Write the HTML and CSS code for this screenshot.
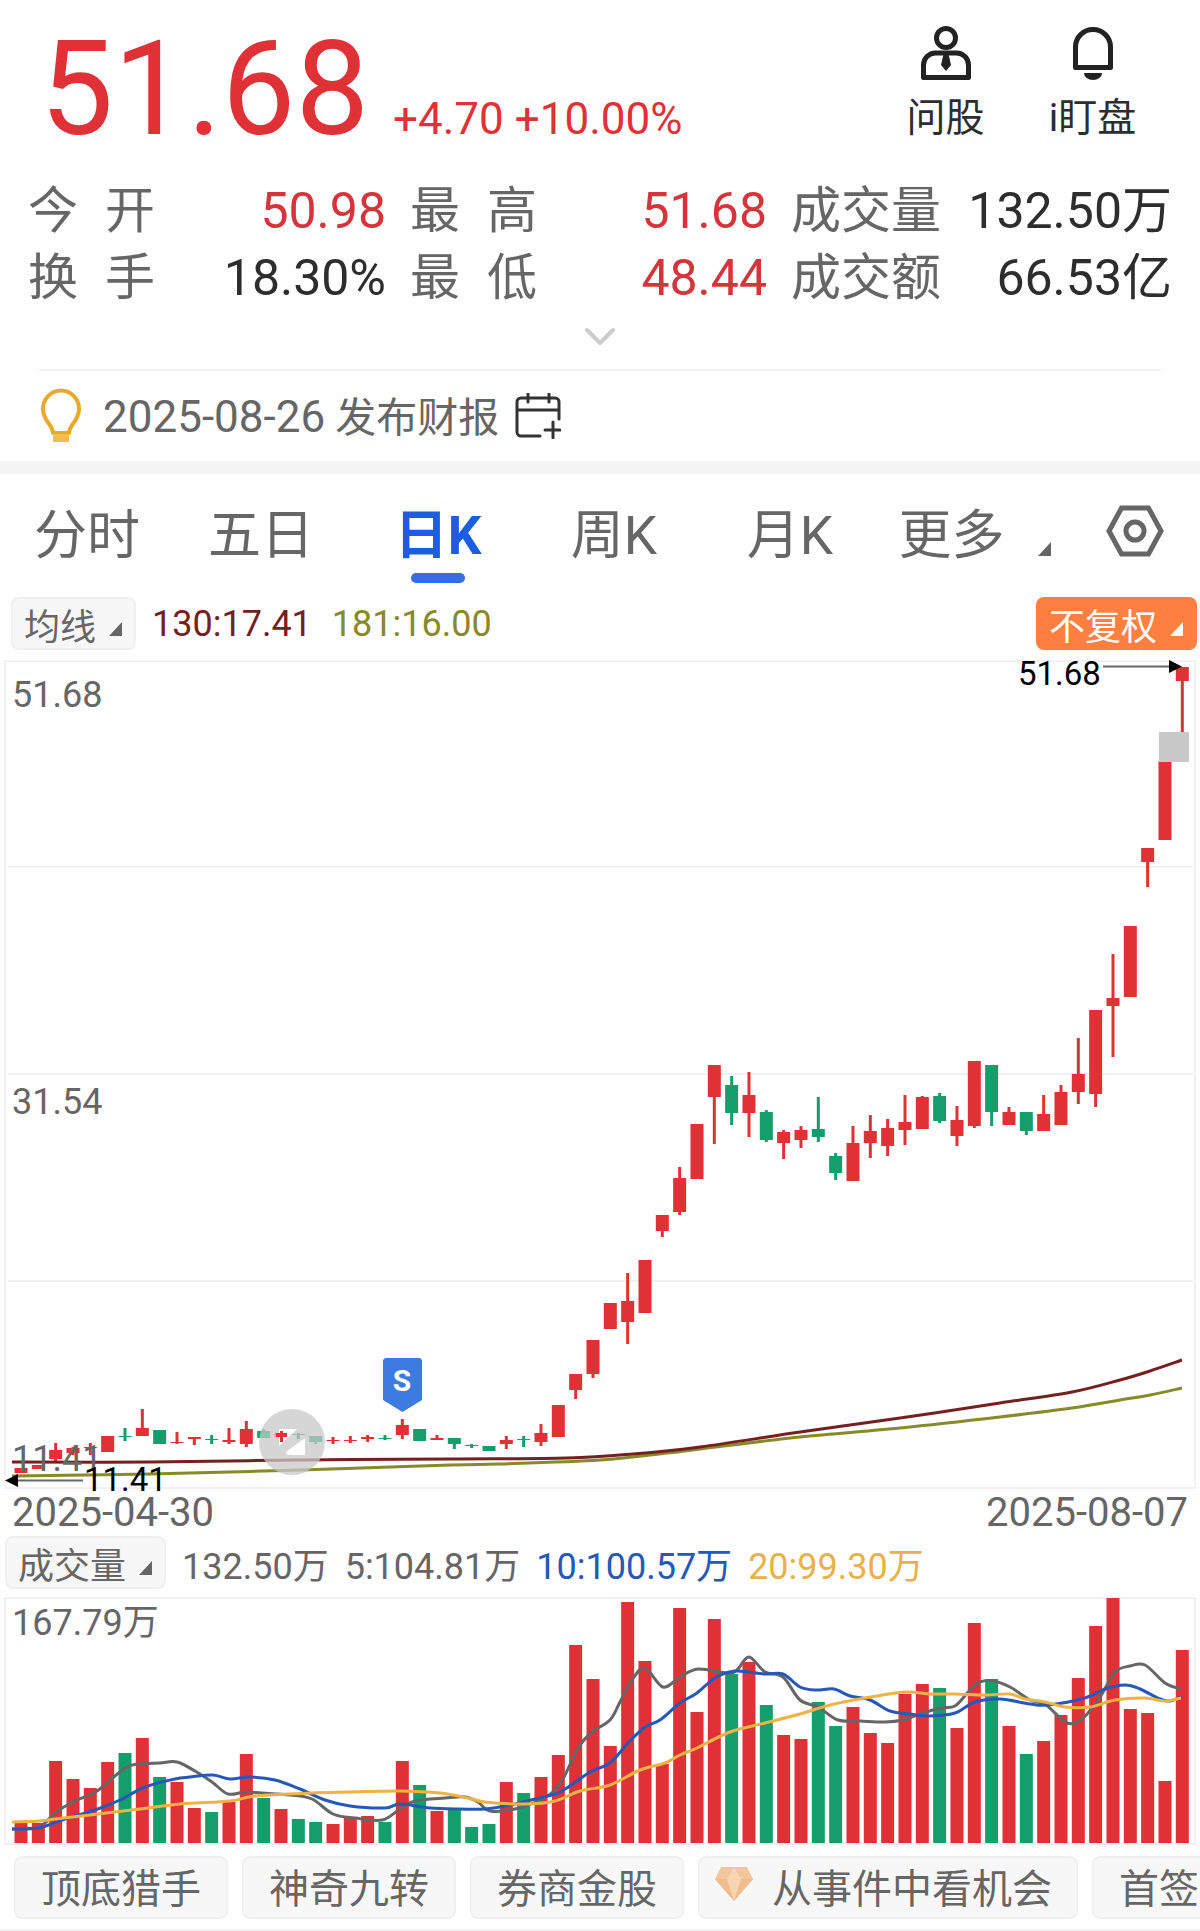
FILE: index.html
```html
<!DOCTYPE html>
<html lang="zh-CN">
<head>
<meta charset="utf-8">
<meta name="viewport" content="width=device-width, initial-scale=1">
<title>个股行情</title>
<link rel="stylesheet" href="styles.css">
</head>
<body>
<main class="page">
  <header class="quote">
    <div class="quote-price">
      <strong class="price">51.68</strong>
      <span class="change">+4.70 +10.00%</span>
    </div>
    <nav class="tools" aria-label="工具">
      <button class="tool" type="button">
        <svg class="tool-icon" viewBox="0 0 56 56" aria-hidden="true">
          <circle cx="28" cy="13" r="9.500" fill="none" stroke="#222" stroke-width="5"/>
          <path d="M5.500 52.500V40a12 12 0 0 1 12-12h21a12 12 0 0 1 12 12v12.500z" fill="none" stroke="#222" stroke-width="5" stroke-linejoin="round"/>
          <path d="M25.500 29h5l2.500 11-5 6-5-6z" fill="#222"/>
        </svg>
        <span>问股</span>
      </button>
      <button class="tool" type="button">
        <svg class="tool-icon" viewBox="0 0 56 56" aria-hidden="true">
          <path d="M10.500 42.500V22a17.500 17.500 0 0 1 35 0v20.500z" fill="none" stroke="#222" stroke-width="5" stroke-linejoin="round"/>
          <path d="M19 48h18a9 7 0 0 1-18 0z" fill="#222"/>
        </svg>
        <span>i盯盘</span>
      </button>
    </nav>
  </header>

  <dl class="stats">
    <dt class="spread"><span>今</span><span>开</span></dt><dd class="up">50.98</dd>
    <dt class="spread"><span>最</span><span>高</span></dt><dd class="up">51.68</dd>
    <dt>成交量</dt><dd>132.50万</dd>
    <dt class="spread"><span>换</span><span>手</span></dt><dd>18.30%</dd>
    <dt class="spread"><span>最</span><span>低</span></dt><dd class="up">48.44</dd>
    <dt>成交额</dt><dd>66.53亿</dd>
  </dl>
  <button class="expand" type="button" aria-label="展开更多">
    <svg class="expand-icon" viewBox="0 0 32 20" aria-hidden="true"><path d="M3 3l13 13L29 3" fill="none" stroke="#ccc" stroke-width="4" stroke-linecap="round" stroke-linejoin="round"/></svg>
  </button>

  <section class="notice">
    <svg class="bulb" viewBox="0 0 40 56" aria-hidden="true">
      <path d="M12 45c0-8-10-12-10-24a18 18.500 0 0 1 36 0c0 12-10 16-10 24z" fill="none" stroke="#e8a92c" stroke-width="4" stroke-linejoin="round"/>
      <path d="M12 46h16v8H12z" fill="#f4bd4b"/>
    </svg>
    <p class="notice-text"><time class="notice-date">2025-08-26</time> 发布财报</p>
    <button class="calendar" type="button" aria-label="添加日历提醒">
      <svg viewBox="0 0 46 46" aria-hidden="true" fill="none" stroke="#333" stroke-width="3" stroke-linecap="round">
        <path d="M25 43H6a4 4 0 0 1-4-4V9a4 4 0 0 1 4-4h34a4 4 0 0 1 4 4v17M2 17h42M13 1v8M34 1v8M38 29v16M30 37h15"/>
      </svg>
    </button>
  </section>

  <nav class="tabs" aria-label="周期">
    <button class="tab" type="button">分时</button>
    <button class="tab" type="button">五日</button>
    <button class="tab tab-active" type="button" aria-current="true">日K</button>
    <button class="tab" type="button">周K</button>
    <button class="tab" type="button">月K</button>
    <button class="tab tab-more" type="button">更多<svg class="corner" viewBox="0 0 15 16" aria-hidden="true"><path d="M14 1v14H1z"/></svg></button>
    <button class="tab" type="button" aria-label="设置">
      <svg class="gear" viewBox="0 0 58 52" aria-hidden="true" fill="none" stroke="#666"><path d="M15.500 3h27L55 26 42.500 49h-27L3 26z" stroke-width="5"/><circle cx="29" cy="26" r="9" stroke-width="5"/></svg>
    </button>
  </nav>

  <section class="indicator">
    <button class="pill" type="button">均线<svg class="corner" viewBox="0 0 15 16" aria-hidden="true"><path d="M14 1v14H1z"/></svg></button>
    <span class="ma130">130:17.41</span>
    <span class="ma181">181:16.00</span>
    <button class="pill pill-orange" type="button">不复权<svg class="corner" viewBox="0 0 15 16" aria-hidden="true"><path d="M14 1v14H1z"/></svg></button>
  </section>

  <svg class="chart" id="kline" viewBox="0 0 1200 831" role="img" aria-label="日K线图">
    <path d="M5 1H1195V828H5zM8 207H1193M8 414H1193M8 621H1193" fill="none" stroke="#f1f1f1" stroke-width="2"/>
    <g id="candles"></g>
    <path id="ma181" fill="none" stroke="#878a2b" stroke-width="3"/>
    <path id="ma130" fill="none" stroke="#74201f" stroke-width="3"/>
    <rect x="1159" y="72" width="30" height="30" fill="#c8c8c8"/>
    <g class="axis">
      <text x="12" y="47">51.68</text>
      <text x="12" y="454">31.54</text>
      <text x="12" y="811">11.41</text>
    </g>
    <g class="extreme">
      <text x="1018" y="25">51.68</text>
      <text x="84" y="831">11.41</text>
      <path d="M1103 6.500h67M17 820.500h66" stroke="#666" stroke-width="2"/>
      <path d="M1169 0l13 6.500-13 6.500zM18 814l-13 6.500 13 6.500z"/>
    </g>
    <path d="M385 698h35l2 2v40l-19.500 12-19.500-12v-40z" fill="#3e7be0"/>
    <text class="marker" x="402" y="731">S</text>
    <circle cx="292" cy="782" r="33" fill="#c8c8c8" fill-opacity=".75"/>
    <path d="M279 769h18l-18 17zM305 778v17h-18l-1-3z" fill="#fff"/>
    <path d="M276 773h11v4h-11zM280 771h3v11h-3z" fill="#e03236"/>
  </svg>
  <div class="dates"><time>2025-04-30</time><time>2025-08-07</time></div>

  <section class="indicator indicator-volume">
    <button class="pill" type="button">成交量<svg class="corner" viewBox="0 0 15 16" aria-hidden="true"><path d="M14 1v14H1z"/></svg></button>
    <span>132.50万</span>
    <span>5:104.81万</span>
    <span class="vol10">10:100.57万</span>
    <span class="vol20">20:99.30万</span>
  </section>
  <svg class="chart" viewBox="0 0 1200 248" role="img" aria-label="成交量图">
    <path d="M5 1H1195V247H5z" fill="none" stroke="#f1f1f1" stroke-width="2"/>
    <g id="volumes"></g>
    <path id="vma5" fill="none" stroke="#666" stroke-width="3"/>
    <path id="vma10" fill="none" stroke="#2558b8" stroke-width="3"/>
    <path id="vma20" fill="none" stroke="#efb244" stroke-width="3"/>
    <g class="axis"><text x="12" y="38">167.79万</text></g>
  </svg>

  <nav class="chips" aria-label="推荐">
    <button class="chip" type="button">顶底猎手</button>
    <button class="chip" type="button">神奇九转</button>
    <button class="chip" type="button">券商金股</button>
    <button class="chip chip-gem" type="button">
      <svg class="gem" viewBox="0 0 40 34" aria-hidden="true"><path d="M7 0h26l6 12-19 22L1 12z" fill="#f3c79c"/><path d="M1 12h38L20 34z" fill="#efbd90"/><path d="M13 12l7-12 7 12-7 22z" fill="#f7d5b3"/></svg>从事件中看机会</button>
    <button class="chip" type="button">首签必读</button>
  </nav>
</main>
<script src="chart.js"></script>
</body>
</html>
```
FILE: styles.css
```css
* { box-sizing: border-box; }

body {
  margin: 0;
  background: #fefefe;
  color: #666;
  font-family: Roboto, "Noto Sans CJK SC", sans-serif;
}

button {
  margin: 0;
  padding: 0;
  border: 0;
  background: none;
  color: inherit;
  font: inherit;
}

svg { display: block; }

.page { overflow: hidden; }

.quote {
  display: flex;
  justify-content: space-between;
  padding: 0 34px 0 40px;
}

.quote-price {
  display: flex;
  align-items: baseline;
  gap: 24px;
  color: #e03236;
}

.price {
  font-size: 131px;
  font-weight: 400;
  line-height: 178px;
}

.change { font-size: 44px; }

.tools {
  display: flex;
  padding-top: 25px;
}

.tool {
  display: flex;
  flex-direction: column;
  align-items: center;
  gap: 8px;
  width: 147px;
  color: #2d2d2d;
  font-size: 39px;
  line-height: 58px;
}

.tool-icon {
  width: 56px;
  height: 56px;
}

.stats {
  display: grid;
  grid-template-columns: 127fr 255fr 127fr 254fr 150fr 231fr;
  margin: 0;
  padding: 0 28px;
  font-size: 50px;
  line-height: 67px;
}

.stats dt { white-space: nowrap; }

.stats dd {
  margin: 0;
  padding-right: 24px;
  color: #2d2d2d;
  text-align: right;
  white-space: nowrap;
}

.stats dd:nth-of-type(3n) { padding-right: 0; }

.stats .up { color: #d5353a; }

.spread {
  display: flex;
  justify-content: space-between;
}

.expand {
  display: flex;
  justify-content: center;
  width: 100%;
  height: 57px;
  padding-top: 15px;
}

.expand-icon {
  width: 32px;
  height: 20px;
}

.notice {
  display: flex;
  align-items: center;
  margin: 0 39px;
  height: 92px;
  border-top: 2px solid #f1f1f1;
  font-size: 41px;
}

.notice-text {
  margin: 0;
  padding-bottom: 4px;
}

.notice-date { font-size: 44px; }

.bulb {
  width: 44px;
  height: 56px;
  margin-right: 20px;
}

.calendar {
  width: 46px;
  height: 46px;
  margin-left: 16px;
}

.tabs {
  display: grid;
  grid-template-columns: 174fr 174fr 180fr 172fr 180fr 190fr 130fr;
  height: 136px;
  border-top: 13px solid #f4f4f4;
  font-size: 53px;
}

.tab {
  display: flex;
  align-items: center;
  justify-content: center;
  padding-bottom: 10px;
}

.tab-active {
  position: relative;
  color: #1c5edf;
  font-weight: 700;
}

.tab-active::after {
  content: "";
  position: absolute;
  bottom: 14px;
  width: 54px;
  height: 10px;
  border-radius: 5px;
  background: #346fe0;
}

.corner {
  width: 15px;
  height: 16px;
  fill: currentColor;
}

.tab-more { gap: 32px; }

.tab-more .corner { margin-top: 36px; }

.gear {
  width: 58px;
  height: 52px;
}

.indicator {
  display: flex;
  align-items: center;
  gap: 16px;
  padding: 0 3px 10px 11px;
  font-size: 36px;
}

.pill {
  display: flex;
  align-items: center;
  gap: 12px;
  height: 53px;
  padding: 0 11px;
  border: 2px solid #f0f0f0;
  border-radius: 8px;
  background: #f7f7f7;
}

.pill .corner { margin-top: 10px; }

.pill-orange {
  margin-left: auto;
  border-color: #ff7f40;
  background: #ff7f40;
  color: #fff;
}

.ma130 { color: #74201f; }

.ma181 {
  margin-left: 4px;
  color: #878a2b;
}

.chart {
  width: 100%;
  height: auto;
}

.axis {
  fill: #666;
  font-size: 36px;
}

.extreme {
  fill: #000;
  font-size: 33px;
}

.marker {
  fill: #fff;
  font-size: 30px;
  font-weight: 700;
  text-anchor: middle;
}

.dates {
  display: flex;
  justify-content: space-between;
  padding: 0 12px 2px;
  font-size: 40px;
  line-height: 43px;
}

.indicator-volume {
  padding: 0 3px 8px 5px;
}

.vol10 { color: #2558b8; }

.vol20 { color: #eab14b; }

.chips {
  display: flex;
  gap: 14px;
  padding: 11px 0 10px 14px;
  border-bottom: 2px solid #f1f1f1;
}

.chip {
  display: flex;
  flex: none;
  align-items: center;
  height: 63px;
  padding: 0 25px 4px;
  border: 2px solid #f0f0f0;
  border-radius: 8px;
  background: #f7f7f7;
  font-size: 40px;
}

.chip-gem { padding: 0 24px 4px 14px; }

.gem {
  width: 40px;
  height: 34px;
  margin: 0 18px 4px 0;
}
```
FILE: chart.js
```javascript
const SVG_NS = "http://www.w3.org/2000/svg";
const RED = "#e03236";
const GREEN = "#139e6b";
const FIRST_X = 21;
const STEP = 17.333;
const BAR_WIDTH = 13;

// Sessions that closed below their open.
const falling = new Set([6, 8, 11, 14, 16, 17, 21, 23, 25, 26, 27, 29, 41, 43, 46, 47, 53, 56, 58]);

// Each session: high, body top, body bottom, low.
const candles = [
  [808,808,813,813],[805,805,809,809],[783,790,799,801],[787,788,793,795],[783,787,788,795],
  [776,776,792,792],[768,776,777,781],[749,768,776,776],[770,770,784,784],[772,782,783,784],
  [777,777,779,785],[775,779,780,784],[768,780,782,784],[761,769,784,787],[769,771,778,778],
  [771,773,777,782],[773,774,775,779],[776,776,782,784],[777,780,781,784],[776,780,781,783],
  [775,777,779,782],[775,778,779,780],[759,765,775,779],[769,769,781,781],[775,778,780,780],
  [778,778,784,789],[784,785,786,788],[786,786,791,791],[776,780,784,789],[776,779,780,787],
  [764,773,782,786],[745,745,777,777],[714,714,730,739],[680,680,714,718],[643,643,669,669],
  [613,641,662,684],[600,600,653,653],[555,555,571,577],[507,518,552,555],[464,464,519,519],
  [405,405,437,484],[416,425,453,465],[412,435,453,477],[450,452,480,482],[470,472,483,499],
  [466,470,480,488],[437,469,477,482],[493,496,513,520],[466,483,521,521],[455,471,483,498],
  [459,468,486,496],[435,462,470,485],[436,437,469,469],[433,436,461,463],[446,460,476,486],
  [401,401,466,468],[405,405,452,466],[447,452,465,465],[452,452,471,475],[435,454,471,471],
  [425,432,465,465],[378,414,432,444],[350,350,434,447],[294,338,346,397],[266,266,337,337],
  [188,188,202,227],[101,101,180,180],[7,7,21,72]
];

// Height of each volume bar.
const volumes = [
  20,20,82,64,55,81,90,105,66,61,35,31,41,89,45,34,24,21,19,25,27,21,82,58,32,33,16,19,61,50,66,88,
  198,164,97,241,182,79,235,131,224,169,181,138,108,104,141,117,136,110,100,149,159,155,115,220,164,
  117,89,102,128,165,217,245,134,130,62,193
];

const lines = {
  ma130: [12,802,150,802,300,800,450,799,567,798,633,794,700,787,800,772,900,758,1000,743,1072,732,1120,720,1150,711,1182,700],
  ma181: [12,816,150,814,300,810,450,805,500,804,600,800,667,793,700,789,800,777,900,768,1000,757,1072,748,1120,740,1150,735,1182,728],
  vma5: [12,232,35,231,45,226,56,215,75,204,97,194,125,171,140,167,160,166,177,165,195,174,212,185,228,197,245,195,262,196,290,198,312,202,333,217,355,221,382,223,400,212,415,204,445,201,465,200,478,205,490,214,515,212,540,203,555,193,565,178,578,151,592,135,610,123,620,105,632,83,645,71,663,90,680,80,698,72,727,76,737,73,749,60,765,75,783,80,800,103,818,110,838,123,860,124,885,125,903,123,920,117,940,111,955,109,970,93,980,85,993,84,1010,90,1030,103,1046,108,1067,126,1083,121,1100,100,1115,75,1130,69,1145,68,1165,86,1181,92],
  vma10: [12,232,38,231,65,222,95,213,120,203,145,190,175,182,190,180,213,178,230,182,250,180,275,183,300,192,325,203,350,209,385,211,400,207,430,211,460,212,485,212,510,208,535,202,560,195,590,175,610,166,628,146,645,130,660,123,680,106,697,96,715,81,735,74,765,77,783,77,800,90,816,93,834,92,850,99,870,103,890,114,910,117,930,119,955,116,975,105,1000,102,1030,107,1048,108,1085,101,1105,92,1125,88,1140,92,1160,102,1170,104,1181,100],
  vma20: [12,225,40,224,55,222,90,218,140,212,180,207,230,204,255,199,310,196,350,195,400,194,440,196,468,201,485,205,525,207,555,204,580,194,610,188,640,173,665,166,680,158,697,151,730,135,765,126,800,117,830,108,865,101,905,95,930,97,955,97,985,98,1010,97,1025,102,1045,105,1065,110,1090,110,1115,103,1145,101,1165,104,1181,101]
};

function addRect(parent, x, y, width, height, fill) {
  const rect = document.createElementNS(SVG_NS, "rect");
  Object.entries({ x, y, width, height, fill }).forEach(([k, v]) => rect.setAttribute(k, v));
  parent.appendChild(rect);
}

// Smooth curve through a flat list of x, y pairs.
function curve(flat) {
  const pts = [];
  for (let i = 0; i < flat.length; i += 2) pts.push([flat[i], flat[i + 1]]);
  let d = "M" + pts[0];
  for (let i = 0; i < pts.length - 1; i++) {
    const a = pts[Math.max(i - 1, 0)], b = pts[i], c = pts[i + 1], e = pts[Math.min(i + 2, pts.length - 1)];
    d += "C" + [b[0] + (c[0] - a[0]) / 6, b[1] + (c[1] - a[1]) / 6,
      c[0] - (e[0] - b[0]) / 6, c[1] - (e[1] - b[1]) / 6, c[0], c[1]];
  }
  return d;
}

const candleLayer = document.getElementById("candles");
candles.forEach(([high, top, bottom, low], i) => {
  const x = FIRST_X + i * STEP;
  const fill = falling.has(i) ? GREEN : RED;
  addRect(candleLayer, x - 1.5, high, 3, low - high, fill);
  addRect(candleLayer, x - BAR_WIDTH / 2, top, BAR_WIDTH, bottom - top, fill);
});

const volumeLayer = document.getElementById("volumes");
volumes.forEach((height, i) => {
  addRect(volumeLayer, FIRST_X + i * STEP - BAR_WIDTH / 2, 246 - height, BAR_WIDTH, height,
    falling.has(i) ? GREEN : RED);
});

Object.entries(lines).forEach(([id, pts]) => document.getElementById(id).setAttribute("d", curve(pts)));
```
